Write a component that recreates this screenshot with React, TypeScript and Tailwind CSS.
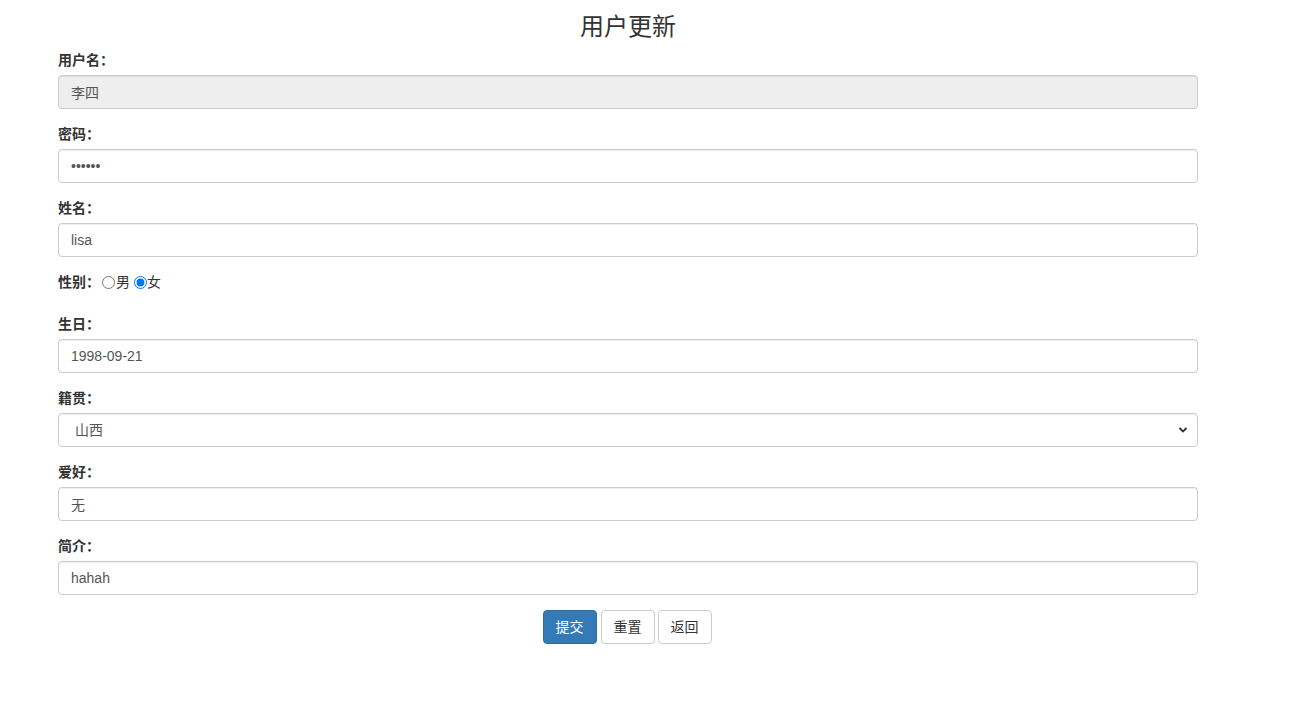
import React from 'react';

const font = "font-['Liberation_Sans','Noto_Sans_CJK_SC',sans-serif]";
const inputCls =
  'block w-full h-[34px] px-3 text-[14px] text-[#555] border border-[#ccc] rounded-[4px] shadow-[inset_0_1px_1px_rgba(0,0,0,0.075)] outline-none';

const Label: React.FC<{ children: React.ReactNode }> = ({ children }) => (
  <label className="block mb-[5px] text-[14px] leading-[20px] font-bold text-[#333]">{children}</label>
);

const App: React.FC = () => {
  return (
    <div className={`${font} bg-white min-h-[709px] text-[#333] text-[14px]`}>
      <div className="ml-[58px] w-[1140px]">
        <h3 className="text-center text-[24px] leading-[26px] pt-[14px] mb-[10px]">用户更新</h3>

        <div className="mb-[15px]">
          <Label>用户名：</Label>
          <input className={`${inputCls} bg-[#eee]`} value="李四" disabled readOnly />
        </div>

        <div className="mb-[15px]">
          <Label>密码：</Label>
          <input className={`${inputCls} bg-white`} type="password" value="123456" readOnly />
        </div>

        <div className="mb-[15px]">
          <Label>姓名：</Label>
          <input className={`${inputCls} bg-white`} value="lisa" readOnly />
        </div>

        <div className="mb-[15px] h-[27px] flex items-start">
          <span className="text-[14px] leading-[20px] font-bold">性别：</span>
          <label className="flex items-center leading-[20px] ml-[2px]">
            <input type="radio" name="sex" className="m-0 w-[13px] h-[13px]" readOnly />
            <span className="ml-[1px]">男</span>
          </label>
          <label className="flex items-center leading-[20px] ml-[4px]">
            <input type="radio" name="sex" className="m-0 w-[13px] h-[13px]" defaultChecked />
            <span>女</span>
          </label>
        </div>

        <div className="mb-[15px]">
          <Label>生日：</Label>
          <input className={`${inputCls} bg-white`} value="1998-09-21" readOnly />
        </div>

        <div className="mb-[15px]">
          <Label>籍贯：</Label>
          <div className="relative">
            <select
              className={`${inputCls} bg-white appearance-none pl-[16px]`}
              defaultValue="山西"
            >
              <option>北京</option>
              <option>山西</option>
              <option>河北</option>
            </select>
            <svg
              className="absolute right-[10px] top-[12px] pointer-events-none"
              width="10"
              height="10"
              viewBox="0 0 10 10"
            >
              <path d="M1.5 3 L5 6.5 L8.5 3" fill="none" stroke="#333" strokeWidth="1.8" />
            </svg>
          </div>
        </div>

        <div className="mb-[15px]">
          <Label>爱好：</Label>
          <input className={`${inputCls} bg-white`} value="无" readOnly />
        </div>

        <div className="mb-[15px]">
          <Label>简介：</Label>
          <input className={`${inputCls} bg-white`} value="hahah" readOnly />
        </div>

        <div className="flex justify-center gap-[4px] pr-[2px]">
          <button className="h-[34px] px-3 text-[14px] text-white bg-[#337ab7] border border-[#2e6da4] rounded-[4px]">
            提交
          </button>
          <button className="h-[34px] px-3 text-[14px] text-[#333] bg-white border border-[#ccc] rounded-[4px]">
            重置
          </button>
          <button className="h-[34px] px-3 text-[14px] text-[#333] bg-white border border-[#ccc] rounded-[4px] -ml-[1px]">
            返回
          </button>
        </div>
      </div>
    </div>
  );
};

export default App;
